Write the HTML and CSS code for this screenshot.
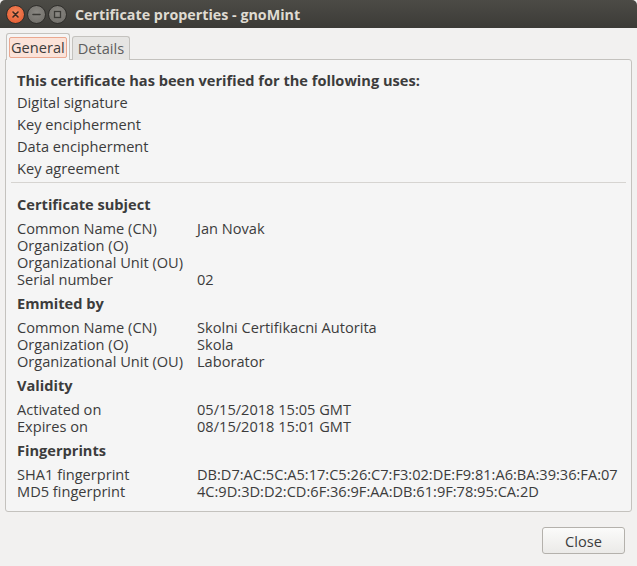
FILE: index.html
```html
<!DOCTYPE html>
<html>
<head>
<meta charset="utf-8">
<link rel="stylesheet" href="styles.css">
</head>
<body>
<div class="window">
  <div class="titlebar">
    <div class="wbtns">
      <span class="wbtn close"><svg width="17" height="17" viewBox="0 0 17 17"><path d="M6 6 L11 11 M11 6 L6 11" stroke="#3a2a22" stroke-width="1.6" stroke-linecap="round"/></svg></span>
      <span class="wbtn"><svg width="17" height="17" viewBox="0 0 17 17"><path d="M5 8.5 H12" stroke="#3b3a36" stroke-width="1.6" stroke-linecap="round"/></svg></span>
      <span class="wbtn"><svg width="17" height="17" viewBox="0 0 17 17"><rect x="5.5" y="5.5" width="6" height="6" fill="none" stroke="#3b3a36" stroke-width="1.3"/></svg></span>
    </div>
    <div class="title">Certificate properties - gnoMint</div>
  </div>
  <div class="body">
    <div class="tabs">
      <div class="tab active"><span class="tablabel">General</span></div>
      <div class="tab"><span class="tablabel">Details</span></div>
    </div>
    <div class="panel">
      <div class="uses">
        <div class="bold">This certificate has been verified for the following uses:</div>
        <div>Digital signature</div>
        <div>Key encipherment</div>
        <div>Data encipherment</div>
        <div>Key agreement</div>
      </div>
      <div class="sep"></div>
      <div class="section first">
        <div class="bold head">Certificate subject</div>
        <div class="grid">
          <div>Common Name (CN)</div><div>Jan Novak</div>
          <div>Organization (O)</div><div></div>
          <div>Organizational Unit (OU)</div><div></div>
          <div>Serial number</div><div>02</div>
        </div>
      </div>
      <div class="section">
        <div class="bold head">Emmited by</div>
        <div class="grid">
          <div>Common Name (CN)</div><div>Skolni Certifikacni Autorita</div>
          <div>Organization (O)</div><div>Skola</div>
          <div>Organizational Unit (OU)</div><div>Laborator</div>
        </div>
      </div>
      <div class="section">
        <div class="bold head">Validity</div>
        <div class="grid">
          <div>Activated on</div><div>05/15/2018 15:05 GMT</div>
          <div>Expires on</div><div>08/15/2018 15:01 GMT</div>
        </div>
      </div>
      <div class="section">
        <div class="bold head">Fingerprints</div>
        <div class="grid">
          <div>SHA1 fingerprint</div><div>DB:D7:AC:5C:A5:17:C5:26:C7:F3:02:DE:F9:81:A6:BA:39:36:FA:07</div>
          <div>MD5 fingerprint</div><div>4C:9D:3D:D2:CD:6F:36:9F:AA:DB:61:9F:78:95:CA:2D</div>
        </div>
      </div>
    </div>
    <div class="actions">
      <button class="btn">Close</button>
    </div>
  </div>
</div>
</body>
</html>
```
FILE: styles.css
```css
html, body {
  margin: 0;
  padding: 0;
}
body {
  width: 637px;
  height: 566px;
  overflow: hidden;
  background: #f2f1f0;
  font-family: "Open Sans", "DejaVu Sans", sans-serif;
  font-size: 14.6px;
  color: #3c3c3c;
}
.window {
  display: flex;
  flex-direction: column;
  height: 566px;
}
.titlebar {
  height: 28px;
  background: linear-gradient(#4c4b46, #3c3b37);
  display: flex;
  align-items: center;
  border-radius: 5px 5px 0 0;
}
.wbtns {
  display: flex;
  gap: 2px;
  margin-left: 6px;
}
.wbtn {
  width: 17px;
  height: 17px;
  border-radius: 50%;
  background: radial-gradient(circle at 50% 40%, #8a8883, #6c6a65);
  border: 0.5px solid #2f2e2b;
  display: flex;
}
.wbtn.close {
  background: radial-gradient(circle at 50% 40%, #f58a5e, #e0532a);
}
.title {
  margin-left: 8px;
  color: #dfdbd2;
  font-weight: bold;
  font-size: 14.3px;
}
.body {
  padding: 6px 5px 0 5px;
  display: flex;
  flex-direction: column;
}
.tabs {
  display: flex;
  align-items: flex-end;
  gap: 2px;
  padding-left: 1px;
  height: 26px;
  position: relative;
  z-index: 1;
  margin-bottom: -1px;
}
.tab {
  height: 23px;
  border: 1px solid #c4c2be;
  border-bottom: none;
  border-radius: 3px 3px 0 0;
  background: #e6e5e3;
  display: flex;
  align-items: center;
  padding: 0 3px;
  color: #5e5e5e;
}
.tab.active {
  height: 26px;
  background: #f5f5f5;
  color: #3c3c3c;
  padding: 0 2px;
}
.tablabel {
  display: block;
  line-height: 19px;
  padding: 0 1px;
  border: 1px solid transparent;
  border-radius: 2px;
}
.tab.active .tablabel {
  background: #fbe3d9;
  border-color: #eba890;
}
.panel {
  height: 453px;
  box-sizing: border-box;
  border: 1px solid #c4c2be;
  border-radius: 0 3px 3px 3px;
  background: #f5f5f5;
  padding: 9px 11px 0 11px;
}
.bold {
  font-weight: bold;
}
.uses div {
  line-height: 22px;
}
.sep {
  height: 1px;
  background: #d6d4d1;
  margin: 3px -6px 0 -6px;
}
.section {
  margin-top: 7px;
}
.section.first {
  margin-top: 13px;
}
.head {
  line-height: 17px;
  margin-bottom: 7px;
}
.grid {
  display: grid;
  grid-template-columns: 180px auto;
  line-height: 17px;
  white-space: nowrap;
}
.actions {
  display: flex;
  justify-content: flex-end;
  padding: 15px 7px 0 0;
}
.btn {
  width: 83px;
  height: 27px;
  font-family: inherit;
  font-size: 14.6px;
  color: #3c3c3c;
  background: linear-gradient(#fbfbfa, #ebeae8);
  border: 1px solid #b4b1ac;
  border-radius: 3px;
  padding: 0;
}
```
